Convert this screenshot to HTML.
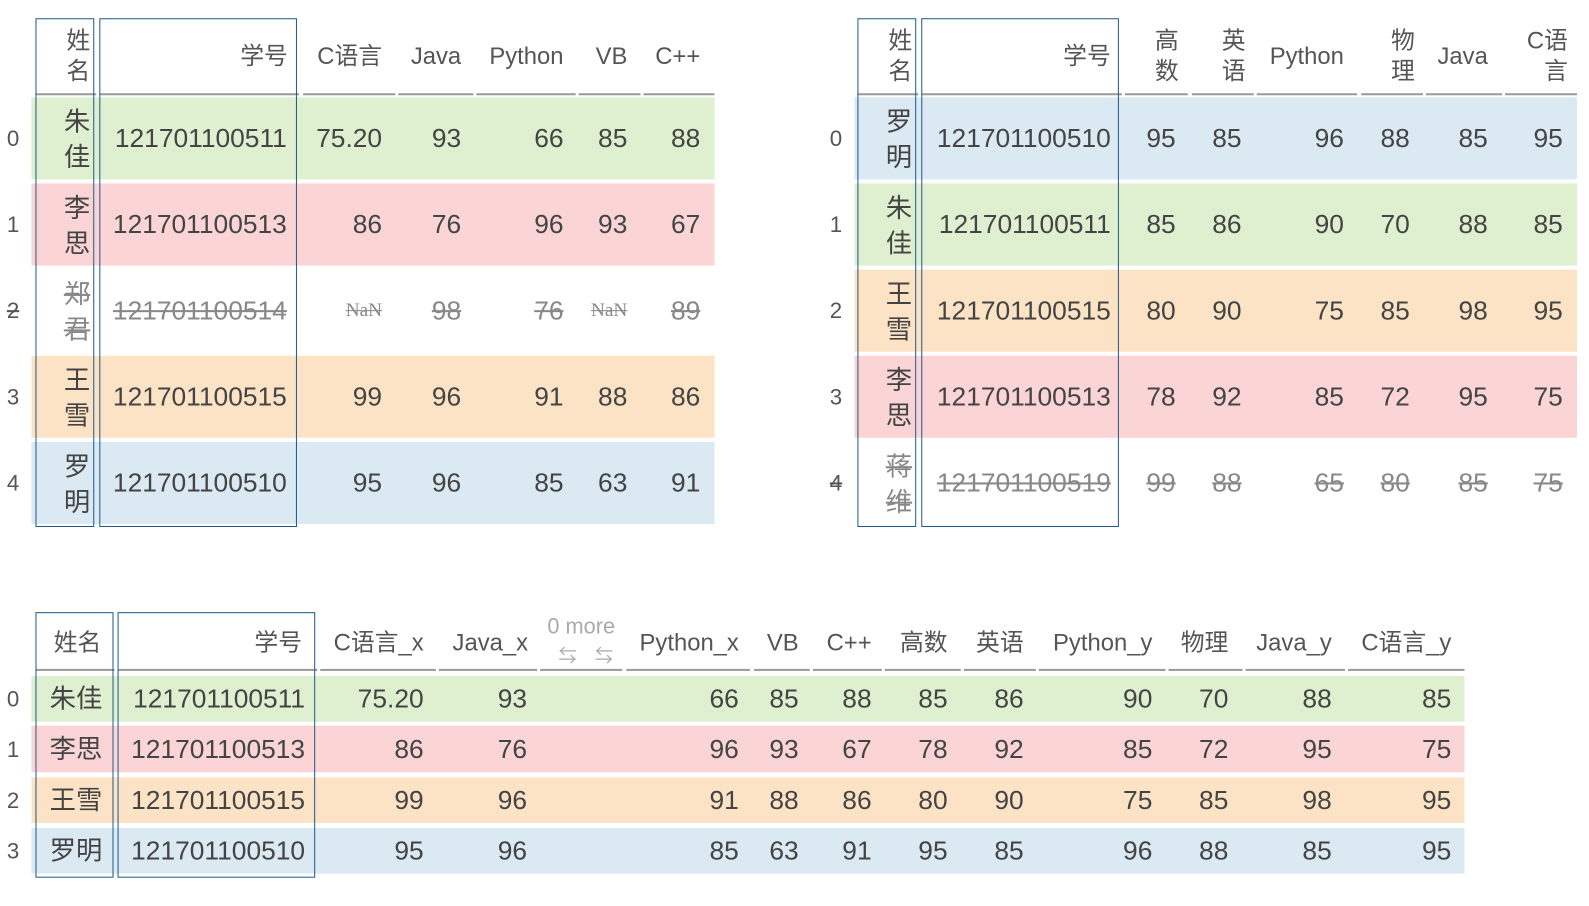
<!DOCTYPE html>
<html><head><meta charset="utf-8"><style>
html,body{margin:0;padding:0;background:#fff;width:1589px;height:894px;overflow:hidden}
#w{position:absolute;left:0;top:0;width:1589px;height:894px;transform:scale(1.0135);transform-origin:0 0;font-family:"Liberation Sans","Noto Sans CJK SC",sans-serif;color:#444}
.c{position:absolute;left:0;display:flex;align-items:center;justify-content:flex-end;white-space:nowrap;font-size:26px;line-height:35px;text-align:right}
.h{color:#555;font-size:23.5px;line-height:30px}
.bg{position:absolute}
.u{position:absolute;height:2px;background:#9a9a9a}
.bx{position:absolute;border:1.5px solid #1e5a8a;box-sizing:border-box}
.s{color:#888;text-decoration:line-through}
.n{font-family:"Liberation Serif",serif;font-size:19px}
.g{background:#dff0d0}.r{background:#fbd5d5}.o{background:#fde3c5}.b{background:#dae9f2}
.i{font-size:22px;color:#555}
</style></head><body><div id="w">

<!-- TABLE 1 -->
<div class="c h" style="top:22px;height:66px;width:89px">姓<br>名</div>
<div class="c h" style="top:22px;height:66px;width:284px">学号</div>
<div class="c h" style="top:22px;height:66px;width:377px">C语言</div>
<div class="c h" style="top:22px;height:66px;width:455px">Java</div>
<div class="c h" style="top:22px;height:66px;width:556px">Python</div>
<div class="c h" style="top:22px;height:66px;width:619px">VB</div>
<div class="c h" style="top:22px;height:66px;width:691px">C++</div>
<div class="u" style="top:92px;left:35px;width:60px"></div>
<div class="u" style="top:92px;left:98px;width:197px"></div>
<div class="u" style="top:92px;left:299px;width:91px"></div>
<div class="u" style="top:92px;left:393px;width:74px"></div>
<div class="u" style="top:92px;left:470px;width:98px"></div>
<div class="u" style="top:92px;left:571px;width:61px"></div>
<div class="u" style="top:92px;left:635px;width:70px"></div>

<div class="bg g" style="left:31px;width:674px;top:96px;height:81px"></div>
<div class="bg r" style="left:31px;width:674px;top:181px;height:81px"></div>
<div class="bg o" style="left:31px;width:674px;top:351px;height:81px"></div>
<div class="bg b" style="left:31px;width:674px;top:436px;height:81px"></div>

<div class="c i" style="top:96px;height:81px;width:19px">0</div>
<div class="c" style="top:97px;height:81px;width:89px">朱<br>佳</div>
<div class="c" style="top:96px;height:81px;width:283px">121701100511</div>
<div class="c" style="top:96px;height:81px;width:377px">75.20</div>
<div class="c" style="top:96px;height:81px;width:455px">93</div>
<div class="c" style="top:96px;height:81px;width:556px">66</div>
<div class="c" style="top:96px;height:81px;width:619px">85</div>
<div class="c" style="top:96px;height:81px;width:691px">88</div>

<div class="c i" style="top:181px;height:81px;width:19px">1</div>
<div class="c" style="top:182px;height:81px;width:89px">李<br>思</div>
<div class="c" style="top:181px;height:81px;width:283px">121701100513</div>
<div class="c" style="top:181px;height:81px;width:377px">86</div>
<div class="c" style="top:181px;height:81px;width:455px">76</div>
<div class="c" style="top:181px;height:81px;width:556px">96</div>
<div class="c" style="top:181px;height:81px;width:619px">93</div>
<div class="c" style="top:181px;height:81px;width:691px">67</div>

<div class="c i s" style="top:266px;height:81px;width:19px">2</div>
<div class="c s" style="top:267px;height:81px;width:89px">郑<br>君</div>
<div class="c s" style="top:266px;height:81px;width:283px">121701100514</div>
<div class="c s n" style="top:266px;height:81px;width:377px">NaN</div>
<div class="c s" style="top:266px;height:81px;width:455px">98</div>
<div class="c s" style="top:266px;height:81px;width:556px">76</div>
<div class="c s n" style="top:266px;height:81px;width:619px">NaN</div>
<div class="c s" style="top:266px;height:81px;width:691px">89</div>

<div class="c i" style="top:351px;height:81px;width:19px">3</div>
<div class="c" style="top:352px;height:81px;width:89px">王<br>雪</div>
<div class="c" style="top:351px;height:81px;width:283px">121701100515</div>
<div class="c" style="top:351px;height:81px;width:377px">99</div>
<div class="c" style="top:351px;height:81px;width:455px">96</div>
<div class="c" style="top:351px;height:81px;width:556px">91</div>
<div class="c" style="top:351px;height:81px;width:619px">88</div>
<div class="c" style="top:351px;height:81px;width:691px">86</div>

<div class="c i" style="top:436px;height:81px;width:19px">4</div>
<div class="c" style="top:437px;height:81px;width:89px">罗<br>明</div>
<div class="c" style="top:436px;height:81px;width:283px">121701100510</div>
<div class="c" style="top:436px;height:81px;width:377px">95</div>
<div class="c" style="top:436px;height:81px;width:455px">96</div>
<div class="c" style="top:436px;height:81px;width:556px">85</div>
<div class="c" style="top:436px;height:81px;width:619px">63</div>
<div class="c" style="top:436px;height:81px;width:691px">91</div>
<div class="bx" style="left:35px;top:18px;width:58px;height:502px"></div>
<div class="bx" style="left:98px;top:18px;width:195px;height:502px"></div>

<!-- TABLE 2 -->
<div class="c h" style="top:22px;height:66px;width:900px">姓<br>名</div>
<div class="c h" style="top:22px;height:66px;width:1096px">学号</div>
<div class="c h" style="top:22px;height:66px;width:1163px">高<br>数</div>
<div class="c h" style="top:22px;height:66px;width:1229px">英<br>语</div>
<div class="c h" style="top:22px;height:66px;width:1326px">Python</div>
<div class="c h" style="top:22px;height:66px;width:1396px">物<br>理</div>
<div class="c h" style="top:22px;height:66px;width:1468px">Java</div>
<div class="c h" style="top:22px;height:66px;width:1547px">C语<br>言</div>
<div class="u" style="top:92px;left:846px;width:60px"></div>
<div class="u" style="top:92px;left:909px;width:198px"></div>
<div class="u" style="top:92px;left:1110px;width:62px"></div>
<div class="u" style="top:92px;left:1176px;width:61px"></div>
<div class="u" style="top:92px;left:1240px;width:99px"></div>
<div class="u" style="top:92px;left:1343px;width:61px"></div>
<div class="u" style="top:92px;left:1407px;width:75px"></div>
<div class="u" style="top:92px;left:1485px;width:71px"></div>

<div class="bg b" style="left:843px;width:713px;top:96px;height:81px"></div>
<div class="bg g" style="left:843px;width:713px;top:181px;height:81px"></div>
<div class="bg o" style="left:843px;width:713px;top:266px;height:81px"></div>
<div class="bg r" style="left:843px;width:713px;top:351px;height:81px"></div>

<div class="c i" style="top:96px;height:81px;width:831px">0</div>
<div class="c" style="top:97px;height:81px;width:900px">罗<br>明</div>
<div class="c" style="top:96px;height:81px;width:1096px">121701100510</div>
<div class="c" style="top:96px;height:81px;width:1160px">95</div>
<div class="c" style="top:96px;height:81px;width:1225px">85</div>
<div class="c" style="top:96px;height:81px;width:1326px">96</div>
<div class="c" style="top:96px;height:81px;width:1391px">88</div>
<div class="c" style="top:96px;height:81px;width:1468px">85</div>
<div class="c" style="top:96px;height:81px;width:1542px">95</div>

<div class="c i" style="top:181px;height:81px;width:831px">1</div>
<div class="c" style="top:182px;height:81px;width:900px">朱<br>佳</div>
<div class="c" style="top:181px;height:81px;width:1096px">121701100511</div>
<div class="c" style="top:181px;height:81px;width:1160px">85</div>
<div class="c" style="top:181px;height:81px;width:1225px">86</div>
<div class="c" style="top:181px;height:81px;width:1326px">90</div>
<div class="c" style="top:181px;height:81px;width:1391px">70</div>
<div class="c" style="top:181px;height:81px;width:1468px">88</div>
<div class="c" style="top:181px;height:81px;width:1542px">85</div>

<div class="c i" style="top:266px;height:81px;width:831px">2</div>
<div class="c" style="top:267px;height:81px;width:900px">王<br>雪</div>
<div class="c" style="top:266px;height:81px;width:1096px">121701100515</div>
<div class="c" style="top:266px;height:81px;width:1160px">80</div>
<div class="c" style="top:266px;height:81px;width:1225px">90</div>
<div class="c" style="top:266px;height:81px;width:1326px">75</div>
<div class="c" style="top:266px;height:81px;width:1391px">85</div>
<div class="c" style="top:266px;height:81px;width:1468px">98</div>
<div class="c" style="top:266px;height:81px;width:1542px">95</div>

<div class="c i" style="top:351px;height:81px;width:831px">3</div>
<div class="c" style="top:352px;height:81px;width:900px">李<br>思</div>
<div class="c" style="top:351px;height:81px;width:1096px">121701100513</div>
<div class="c" style="top:351px;height:81px;width:1160px">78</div>
<div class="c" style="top:351px;height:81px;width:1225px">92</div>
<div class="c" style="top:351px;height:81px;width:1326px">85</div>
<div class="c" style="top:351px;height:81px;width:1391px">72</div>
<div class="c" style="top:351px;height:81px;width:1468px">95</div>
<div class="c" style="top:351px;height:81px;width:1542px">75</div>

<div class="c i s" style="top:436px;height:81px;width:831px">4</div>
<div class="c s" style="top:437px;height:81px;width:900px">蒋<br>维</div>
<div class="c s" style="top:436px;height:81px;width:1096px">121701100519</div>
<div class="c s" style="top:436px;height:81px;width:1160px">99</div>
<div class="c s" style="top:436px;height:81px;width:1225px">88</div>
<div class="c s" style="top:436px;height:81px;width:1326px">65</div>
<div class="c s" style="top:436px;height:81px;width:1391px">80</div>
<div class="c s" style="top:436px;height:81px;width:1468px">85</div>
<div class="c s" style="top:436px;height:81px;width:1542px">75</div>
<div class="bx" style="left:846px;top:18px;width:58px;height:502px"></div>
<div class="bx" style="left:909px;top:18px;width:195px;height:502px"></div>

<!-- TABLE 3 -->
<div class="c h" style="top:612px;height:44px;width:100px">姓名</div>
<div class="c h" style="top:612px;height:44px;width:298px">学号</div>
<div class="c h" style="top:612px;height:44px;width:418px">C语言_x</div>
<div class="c h" style="top:612px;height:44px;width:521px">Java_x</div>
<div style="position:absolute;left:533px;width:81px;top:604px;text-align:center;color:#aaa;font-size:21.5px;line-height:28px">0 more<br><span style="font-size:18px;letter-spacing:18px;padding-left:18px">⇆⇆</span></div>
<div class="c h" style="top:612px;height:44px;width:729px">Python_x</div>
<div class="c h" style="top:612px;height:44px;width:788px">VB</div>
<div class="c h" style="top:612px;height:44px;width:860px">C++</div>
<div class="c h" style="top:612px;height:44px;width:935px">高数</div>
<div class="c h" style="top:612px;height:44px;width:1010px">英语</div>
<div class="c h" style="top:612px;height:44px;width:1137px">Python_y</div>
<div class="c h" style="top:612px;height:44px;width:1212px">物理</div>
<div class="c h" style="top:612px;height:44px;width:1314px">Java_y</div>
<div class="c h" style="top:612px;height:44px;width:1432px">C语言_y</div>
<div class="u" style="top:660px;left:35px;width:78px"></div>
<div class="u" style="top:660px;left:116px;width:197px"></div>
<div class="u" style="top:660px;left:316px;width:114px"></div>
<div class="u" style="top:660px;left:433px;width:97px"></div>
<div class="u" style="top:660px;left:533px;width:81px"></div>
<div class="u" style="top:660px;left:618px;width:122px"></div>
<div class="u" style="top:660px;left:744px;width:55px"></div>
<div class="u" style="top:660px;left:802px;width:68px"></div>
<div class="u" style="top:660px;left:873px;width:75px"></div>
<div class="u" style="top:660px;left:951px;width:71px"></div>
<div class="u" style="top:660px;left:1025px;width:125px"></div>
<div class="u" style="top:660px;left:1153px;width:73px"></div>
<div class="u" style="top:660px;left:1229px;width:98px"></div>
<div class="u" style="top:660px;left:1330px;width:115px"></div>

<div class="bg g" style="left:31px;width:1414px;top:667px;height:45px"></div>
<div class="bg r" style="left:31px;width:1414px;top:716px;height:46px"></div>
<div class="bg o" style="left:31px;width:1414px;top:767px;height:45px"></div>
<div class="bg b" style="left:31px;width:1414px;top:817px;height:45px"></div>

<div class="c i" style="top:667px;height:45px;width:19px">0</div>
<div class="c" style="top:667px;height:45px;width:101px">朱佳</div>
<div class="c" style="top:667px;height:45px;width:301px">121701100511</div>
<div class="c" style="top:667px;height:45px;width:418px">75.20</div>
<div class="c" style="top:667px;height:45px;width:520px">93</div>
<div class="c" style="top:667px;height:45px;width:729px">66</div>
<div class="c" style="top:667px;height:45px;width:788px">85</div>
<div class="c" style="top:667px;height:45px;width:860px">88</div>
<div class="c" style="top:667px;height:45px;width:935px">85</div>
<div class="c" style="top:667px;height:45px;width:1010px">86</div>
<div class="c" style="top:667px;height:45px;width:1137px">90</div>
<div class="c" style="top:667px;height:45px;width:1212px">70</div>
<div class="c" style="top:667px;height:45px;width:1314px">88</div>
<div class="c" style="top:667px;height:45px;width:1432px">85</div>

<div class="c i" style="top:716px;height:46px;width:19px">1</div>
<div class="c" style="top:716px;height:46px;width:101px">李思</div>
<div class="c" style="top:716px;height:46px;width:301px">121701100513</div>
<div class="c" style="top:716px;height:46px;width:418px">86</div>
<div class="c" style="top:716px;height:46px;width:520px">76</div>
<div class="c" style="top:716px;height:46px;width:729px">96</div>
<div class="c" style="top:716px;height:46px;width:788px">93</div>
<div class="c" style="top:716px;height:46px;width:860px">67</div>
<div class="c" style="top:716px;height:46px;width:935px">78</div>
<div class="c" style="top:716px;height:46px;width:1010px">92</div>
<div class="c" style="top:716px;height:46px;width:1137px">85</div>
<div class="c" style="top:716px;height:46px;width:1212px">72</div>
<div class="c" style="top:716px;height:46px;width:1314px">95</div>
<div class="c" style="top:716px;height:46px;width:1432px">75</div>

<div class="c i" style="top:767px;height:45px;width:19px">2</div>
<div class="c" style="top:767px;height:45px;width:101px">王雪</div>
<div class="c" style="top:767px;height:45px;width:301px">121701100515</div>
<div class="c" style="top:767px;height:45px;width:418px">99</div>
<div class="c" style="top:767px;height:45px;width:520px">96</div>
<div class="c" style="top:767px;height:45px;width:729px">91</div>
<div class="c" style="top:767px;height:45px;width:788px">88</div>
<div class="c" style="top:767px;height:45px;width:860px">86</div>
<div class="c" style="top:767px;height:45px;width:935px">80</div>
<div class="c" style="top:767px;height:45px;width:1010px">90</div>
<div class="c" style="top:767px;height:45px;width:1137px">75</div>
<div class="c" style="top:767px;height:45px;width:1212px">85</div>
<div class="c" style="top:767px;height:45px;width:1314px">98</div>
<div class="c" style="top:767px;height:45px;width:1432px">95</div>

<div class="c i" style="top:817px;height:45px;width:19px">3</div>
<div class="c" style="top:817px;height:45px;width:101px">罗明</div>
<div class="c" style="top:817px;height:45px;width:301px">121701100510</div>
<div class="c" style="top:817px;height:45px;width:418px">95</div>
<div class="c" style="top:817px;height:45px;width:520px">96</div>
<div class="c" style="top:817px;height:45px;width:729px">85</div>
<div class="c" style="top:817px;height:45px;width:788px">63</div>
<div class="c" style="top:817px;height:45px;width:860px">91</div>
<div class="c" style="top:817px;height:45px;width:935px">95</div>
<div class="c" style="top:817px;height:45px;width:1010px">85</div>
<div class="c" style="top:817px;height:45px;width:1137px">96</div>
<div class="c" style="top:817px;height:45px;width:1212px">88</div>
<div class="c" style="top:817px;height:45px;width:1314px">85</div>
<div class="c" style="top:817px;height:45px;width:1432px">95</div>
<div class="bx" style="left:35px;top:604px;width:77px;height:262px"></div>
<div class="bx" style="left:116px;top:604px;width:195px;height:262px"></div>

</div></body></html>
